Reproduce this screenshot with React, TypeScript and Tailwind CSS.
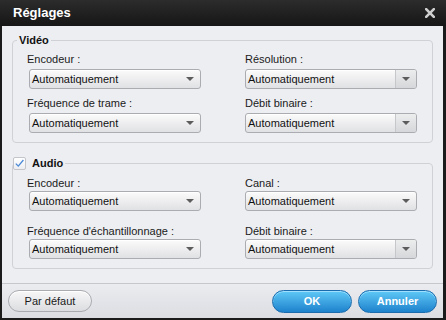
import React from "react";

const Arrow = () => (
  <svg width="8" height="4" viewBox="0 0 8 4">
    <path d="M0 0H8L4 4Z" fill="#5c5c5c" />
  </svg>
);

function Select({ split, className }: { split?: boolean; className: string }) {
  return (
    <div
      className={`${className} flex h-[20px] w-[172px] items-stretch rounded-[3px] border border-[#aaacb1] bg-gradient-to-b from-[#fbfbfb] to-[#e0e1e4] shadow-[inset_0_1px_0_#ffffff]`}
    >
      <span className="flex-1 pl-[2px] pt-px text-[11px] leading-[17px] text-[#111]">Automatiquement</span>
      <span
        className={
          split
            ? "flex w-[21px] items-center justify-center rounded-r-[2px] border-l border-[#c5c7cb] bg-gradient-to-b from-[#eceded] to-[#d6d7da]"
            : "flex w-[21px] items-center justify-center"
        }
      >
        <Arrow />
      </span>
    </div>
  );
}

function Label({ text, className }: { text: string; className: string }) {
  return <div className={`${className} text-[11px] leading-[14px] text-[#1a1a1a]`}>{text}</div>;
}

export default function App() {
  return (
    <div className="flex h-[320px] w-[446px] flex-col bg-[#1b1b1b] font-['Liberation_Sans',Arial,sans-serif]">
      {/* Title bar */}
      <div className="flex h-[26px] items-center justify-between bg-gradient-to-b from-[#2c2c2c] to-[#161616] pl-[13px] pr-[11px]">
        <span className="text-[13px] font-bold leading-[26px] text-white">Réglages</span>
        <svg width="10" height="10" viewBox="0 0 10 10">
          <path d="M1.2 1.2L8.8 8.8M8.8 1.2L1.2 8.8" stroke="#cfcfcf" strokeWidth="2.6" strokeLinecap="square" />
        </svg>
      </div>

      {/* Body */}
      <div className="mb-[2px] ml-[2px] mr-[3px] flex flex-1 flex-col bg-[#edeef2]">
        <div className="px-[10px] pt-[7px]">
          {/* Vidéo */}
          <fieldset className="rounded-[4px] border border-[#cfd1d6] px-[4px] pb-[9px]">
            <legend className="px-[2px] text-[11px] font-bold leading-[14px] text-[#111]">Vidéo</legend>
            <div className="grid grid-cols-[172px_172px] gap-x-[44px] pl-[12px]">
              <div className="flex flex-col">
                <Label className="mt-[5px] -ml-[2px]" text="Encodeur :" />
                <Select className="mt-[3px]" />
                <Label className="mt-[7px] -ml-[2px]" text="Fréquence de trame :" />
                <Select className="mt-[3px]" />
              </div>
              <div className="flex flex-col">
                <Label className="mt-[5px]" text="Résolution :" />
                <Select className="mt-[3px]" split />
                <Label className="mt-[7px]" text="Débit binaire :" />
                <Select className="mt-[3px]" split />
              </div>
            </div>
          </fieldset>

          {/* Audio */}
          <fieldset className="mt-[13px] rounded-[4px] border border-[#cfd1d6] px-[4px] pb-[9px]">
            <legend className="-ml-[4px] flex items-center pr-[2px] text-[11px] font-bold leading-[14px] text-[#111]">
              <span className="flex h-[13px] w-[13px] items-center justify-center rounded-[2px] border border-[#c3c5ca] bg-gradient-to-b from-[#ffffff] to-[#eceef1]">
                <svg width="11" height="11" viewBox="0 0 11 11">
                  <path d="M1.8 5.6L4.3 8.1L9.4 2" fill="none" stroke="#4a88d6" strokeWidth="1.3" />
                </svg>
              </span>
              <span className="ml-[6px]">Audio</span>
            </legend>
            <div className="grid grid-cols-[172px_172px] gap-x-[44px] pl-[12px]">
              <div className="flex flex-col">
                <Label className="mt-[6px] -ml-[2px]" text="Encodeur :" />
                <Select className="mt-[1px]" />
                <Label className="mt-[13px] -ml-[2px]" text="Fréquence d'échantillonnage :" />
                <Select className="mt-[1px]" />
              </div>
              <div className="flex flex-col">
                <Label className="mt-[6px]" text="Canal :" />
                <Select className="mt-[1px]" />
                <Label className="mt-[13px]" text="Débit binaire :" />
                <Select className="mt-[1px]" split />
              </div>
            </div>
          </fieldset>
        </div>

        {/* Footer */}
        <div className="mt-auto flex h-[35px] items-center border-t border-[#c6c7cc] bg-gradient-to-b from-[#ebecf0] to-[#dcdde2] px-[6px]">
          <button className="h-[22px] w-[84px] rounded-full border border-[#a9abb0] bg-gradient-to-b from-[#f7f7f8] to-[#dcdde0] text-[11px] text-[#1a1a1a] shadow-[inset_0_1px_0_#ffffff]">
            Par défaut
          </button>
          <div className="ml-auto flex gap-[6px]">
            <button className="h-[23px] w-[80px] rounded-full border border-[#1a6cae] bg-gradient-to-b from-[#5fc9f7] to-[#1c82cc] text-[11px] font-bold text-white shadow-[inset_0_1px_0_#9fe0ff]">
              OK
            </button>
            <button className="h-[23px] w-[79px] rounded-full border border-[#1a6cae] bg-gradient-to-b from-[#5fc9f7] to-[#1c82cc] text-[11px] font-bold text-white shadow-[inset_0_1px_0_#9fe0ff]">
              Annuler
            </button>
          </div>
        </div>
      </div>
    </div>
  );
}
